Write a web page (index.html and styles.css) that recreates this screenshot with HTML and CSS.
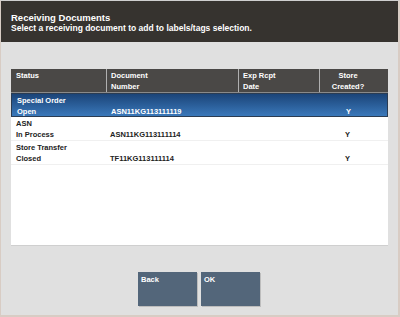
FILE: index.html
```html
<!DOCTYPE html>
<html>
<head>
<meta charset="utf-8">
<link rel="stylesheet" href="styles.css">
</head>
<body>
<div class="frame">
  <div class="header">
    <div class="title">Receiving Documents</div>
    <div class="subtitle">Select a receiving document to add to labels/tags selection.</div>
  </div>
  <div class="main">
    <div class="table">
      <div class="row head">
        <div class="cell">Status</div>
        <div class="cell">Document<br>Number</div>
        <div class="cell">Exp Rcpt<br>Date</div>
        <div class="cell center">Store<br>Created?</div>
      </div>
      <div class="row selected">
        <div class="cell">Special Order<br>Open</div>
        <div class="cell"><br>ASN11KG113111119</div>
        <div class="cell"></div>
        <div class="cell center"><br>Y</div>
      </div>
      <div class="row">
        <div class="cell">ASN<br>In Process</div>
        <div class="cell"><br>ASN11KG113111114</div>
        <div class="cell"></div>
        <div class="cell center"><br>Y</div>
      </div>
      <div class="row">
        <div class="cell">Store Transfer<br>Closed</div>
        <div class="cell"><br>TF11KG113111114</div>
        <div class="cell"></div>
        <div class="cell center"><br>Y</div>
      </div>
    </div>
    <div class="buttons">
      <div class="btn">Back</div>
      <div class="btn">OK</div>
    </div>
  </div>
</div>
</body>
</html>
```

FILE: styles.css
```css
html, body {
  margin: 0;
  padding: 0;
}
body {
  width: 400px;
  height: 317px;
  overflow: hidden;
  font-family: "Liberation Sans", Arial, sans-serif;
}
.frame {
  box-sizing: border-box;
  width: 400px;
  height: 317px;
  background: #e0e0e0;
  border-top: 1px solid #cfcfcf;
  border-left: 1px solid #d8ccc4;
  border-right: 2px solid #d8ccc4;
  border-bottom: 2px solid #d8ccc4;
  display: flex;
  flex-direction: column;
}
.header {
  height: 41px;
  background: #36332f;
  color: #ffffff;
  padding: 11px 0 0 10px;
  box-sizing: border-box;
  font-weight: bold;
}
.title {
  font-size: 9.5px;
  line-height: 11px;
}
.subtitle {
  font-size: 8.5px;
  line-height: 11px;
}
.main {
  padding: 27px 0 0 10px;
  display: flex;
  flex-direction: column;
}
.table {
  width: 377px;
  height: 176px;
  background: #ffffff;
  box-shadow: 0 1px 0 #cfcfcf;
}
.row {
  display: grid;
  grid-template-columns: 95px 132px 81px 69px;
  height: 24px;
  font-size: 7.5px;
  font-weight: bold;
  color: #222222;
  border-bottom: 1px solid #f0f0f0;
  box-sizing: border-box;
}
.row .cell {
  padding: 2px 0 0 4px;
  line-height: 10.5px;
}
.row .cell:first-child {
  padding-left: 5px;
}
.row .cell.center {
  text-align: center;
  padding-left: 0;
  padding-right: 12px;
}
.row.head {
  background: #4a4846;
  color: #ffffff;
  border-bottom: 1px solid #8a8a8a;
}
.row.head .cell {
  border-left: 1px solid #b0b0b0;
}
.row.head .cell:first-child {
  border-left: none;
}
.row.selected {
  background: linear-gradient(#1b4478, #3a78ba);
  color: #ffffff;
  border: 1px solid #2b3c52;
}
.buttons {
  display: flex;
  gap: 4px;
  margin: 27px 0 0 127px;
}
.btn {
  width: 59px;
  height: 34px;
  box-sizing: border-box;
  background: #53667a;
  color: #ffffff;
  font-size: 7.5px;
  font-weight: bold;
  padding: 3px 0 0 3px;
  box-shadow: 1px 1px 0 #bdbdbd;
}
```
